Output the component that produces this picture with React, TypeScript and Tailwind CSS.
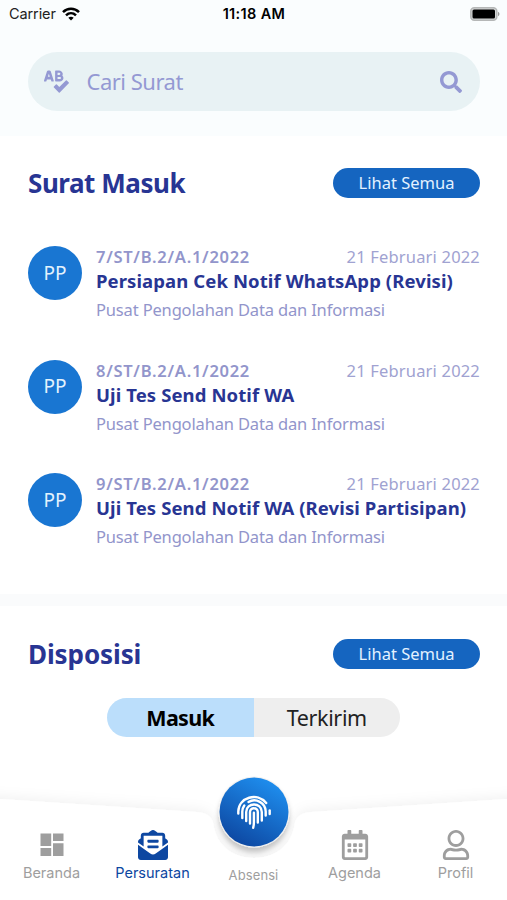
import React from "react";
import { FaSpellCheck, FaSearch, FaEnvelopeOpenText, FaRegCalendarAlt, FaRegUser } from "react-icons/fa";

const letters = [
  {
    number: "7/ST/B.2/A.1/2022",
    title: "Persiapan Cek Notif WhatsApp (Revisi)",
  },
  {
    number: "8/ST/B.2/A.1/2022",
    title: "Uji Tes Send Notif WA",
  },
  {
    number: "9/ST/B.2/A.1/2022",
    title: "Uji Tes Send Notif WA (Revisi Partisipan)",
  },
];

function StatusBar() {
  return (
    <div className="grid h-[28px] grid-cols-3 items-center pl-[9px] pr-[7px] font-['Inter',sans-serif] text-black">
      <div className="flex items-center gap-[6px] text-[14.5px] text-[#222]">
        <span className="tracking-[-0.1px]">Carrier</span>
        <svg width="18" height="14" viewBox="0 0 18 14" fill="none" stroke="#000" strokeWidth="2.5">
          <path d="M1 5.2C5.5.7 12.500.7 17 5.200" />
          <path d="M4 8.300c2.900-2.800 7.100-2.800 10 0" />
          <path d="M6.300 10.700c1.600-1.400 3.800-1.400 5.400 0L9 13.400z" fill="#000" stroke="none" />
        </svg>
      </div>
      <div className="-ml-[1px] text-center text-[14.5px] font-semibold tracking-[0.35px]">11:18 AM</div>
      <div className="flex justify-end">
        <svg width="30" height="14" viewBox="0 0 30 14">
          <rect x="0.800" y="0.800" width="26" height="12.400" rx="3.500" fill="#d5d7d7" stroke="#b5b7b7" strokeWidth="1.500" />
          <rect x="2.500" y="2.500" width="22.500" height="9" rx="1.500" fill="#000" />
          <path d="M28 4.800c2 .8 2 3.600 0 4.400z" fill="#999" />
        </svg>
      </div>
    </div>
  );
}

function SectionHeader({ title, className }: { title: string; className: string }) {
  return (
    <div className="flex items-center justify-between">
      <h2 className={`text-[26px] leading-[32px] font-bold text-[#283593] ${className}`}>{title}</h2>
      <button className="h-[30px] w-[147px] rounded-full bg-[#1565c0] text-[16.500px] leading-[30px] text-[#e3f1ff]">
        Lihat Semua
      </button>
    </div>
  );
}

function DashboardIcon() {
  return (
    <svg width="24" height="24" viewBox="0 0 24 24" fill="currentColor">
      <path d="M.5.5h10.700v12.500H.5zM13 .5h10.500v7.500H13zM.5 15h10.700v8H.5zM13 10.200h10.500V23H13z" />
    </svg>
  );
}

function FingerprintIcon() {
  return (
    <svg
      width="36"
      height="36"
      viewBox="0 0 36 36"
      fill="none"
      stroke="#fff"
      strokeWidth="2.400"
      strokeLinecap="round"
      className="mt-[24px]"
    >
      <path d="M2.300 19.500V17.500C2.800 3.200 21.500-2 30.200 9" />
      <path d="M33.700 16.500v3.500" />
      <path d="M6.300 24v-6.500c0-2.300.8-4.300 2-6" />
      <path d="M12.500 8C20 3.500 29.500 9 29.700 17.500v4" />
      <path d="M10.200 27v-9c0-10 15.600-10 15.600 0v8.500" />
      <path d="M14 29.500V18c0-5 7.800-5 7.800 0v10.500" />
      <path d="M17.900 18.800v9.500c0 2-.2 3.500-.7 5.500" />
    </svg>
  );
}

function Tab({ children, icon, active }: { children: string; icon: React.ReactNode; active?: boolean }) {
  return (
    <div className={`flex w-[101px] flex-col items-center ${active ? "text-[#0d47a1]" : "text-[#9e9e9e]"}`}>
      <div className="flex h-[32px] items-center justify-center">{icon}</div>
      <span className="mt-[3px] text-[14.500px] leading-[18px]">{children}</span>
    </div>
  );
}

function BottomNav() {
  return (
    <nav className="relative h-[130px] font-['Inter',sans-serif]">
      <svg className="absolute inset-0" width="507" height="130" viewBox="0 0 507 130">
        <defs>
          <filter id="edge" x="-10%" y="-30%" width="120%" height="160%">
            <feDropShadow dx="0" dy="-3" stdDeviation="6" floodColor="#000" floodOpacity="0.05" />
          </filter>
          <filter id="lift" x="-30%" y="-30%" width="160%" height="170%">
            <feDropShadow dx="0" dy="5" stdDeviation="2.500" floodColor="#000" floodOpacity="0.22" />
          </filter>
          <linearGradient id="disc" x1="0.8" y1="0.1" x2="0.3" y2="1">
            <stop offset="0" stopColor="#1e8cec" />
            <stop offset="1" stopColor="#0d47a1" />
          </linearGradient>
        </defs>
        <path
          d="M-20 28 0 29 196 42Q211 43 213 53C216 76 233 88 254 88S292 76 295 53Q297 43 312 42L507 29 527 28V160H-20Z"
          fill="#fff"
          filter="url(#edge)"
        />
        <circle cx="254" cy="42" r="35.500" fill="#f0f0f0" filter="url(#lift)" />
        <circle cx="254" cy="42" r="34.500" fill="url(#disc)" />
      </svg>
      <div className="relative flex h-full justify-center pt-[59px]">
        <Tab icon={<DashboardIcon />}>Beranda</Tab>
        <Tab active icon={<FaEnvelopeOpenText size={30} />}>Persuratan</Tab>
        <div className="-mt-[59px] flex w-[101px] flex-col items-center text-[#9e9e9e]">
          <FingerprintIcon />
          <span className="mt-[36px] text-[13px] leading-[18px] tracking-[0.1px]">Absensi</span>
        </div>
        <Tab icon={<FaRegCalendarAlt size={30} />}>Agenda</Tab>
        <Tab icon={<FaRegUser size={30} />}>Profil</Tab>
      </div>
    </nav>
  );
}

export default function App() {
  return (
    <div className="flex h-[900px] w-[507px] flex-col overflow-hidden bg-white font-['Noto_Sans','Open_Sans',sans-serif]">
      <header className="h-[136px] bg-[#fafdfe]">
        <StatusBar />
        <div className="mr-[27px] ml-[28px] mt-[24px] flex h-[59px] items-center rounded-full bg-[#e8f2f4] pr-[18px] pl-[16px] text-[#9499d3]">
          <FaSpellCheck size={25} />
          <span className="ml-[17.500px] flex-1 text-[22px] tracking-[-0.5px]">Cari Surat</span>
          <FaSearch size={22} />
        </div>
      </header>

      <section className="h-[458px] pr-[27px] pl-[28px] pt-[31px]">
        <SectionHeader title="Surat Masuk" className="tracking-[-0.45px]" />
        <div className="mt-[47px] flex flex-col">
          {letters.map((l) => (
            <article key={l.number} className="flex h-[113.500px] gap-[14px]">
              <div className="flex h-[54px] w-[54px] shrink-0 items-center justify-center rounded-full bg-[#1976d2] text-[19px] text-[#e3f2fd]">
                PP
              </div>
              <div className="min-w-0 flex-1 whitespace-nowrap text-[#9295cb]">
                <div className="flex justify-between text-[16.500px] leading-[22px]">
                  <span className="font-semibold tracking-[0.72px]">{l.number}</span>
                  <span className="tracking-[0.18px] text-[#a0a2d1]">21 Februari 2022</span>
                </div>
                <h3 className="text-[18.500px] leading-[25px] font-bold tracking-[0.1px] text-[#283593]">{l.title}</h3>
                <p className="mt-[6px] text-[16.500px] leading-[22px] tracking-[-0.16px]">
                  Pusat Pengolahan Data dan Informasi
                </p>
              </div>
            </article>
          ))}
        </div>
      </section>

      <div className="h-[12px] shrink-0 bg-[#fafbfc]" />

      <section className="h-[164px] pr-[27px] pl-[28px] pt-[32px]">
        <SectionHeader title="Disposisi" className="tracking-[-0.1px]" />
        <div className="ml-[79px] mt-[28px] flex h-[39px] w-[293px] overflow-hidden rounded-full text-[21.500px] leading-[39px] text-black">
          <div className="flex-1 bg-[#bbdefb] text-center font-bold tracking-[-0.7px]">Masuk</div>
          <div className="flex-1 bg-[#eee] text-center tracking-[-0.35px] text-[#222]">Terkirim</div>
        </div>
      </section>

      <BottomNav />
    </div>
  );
}
